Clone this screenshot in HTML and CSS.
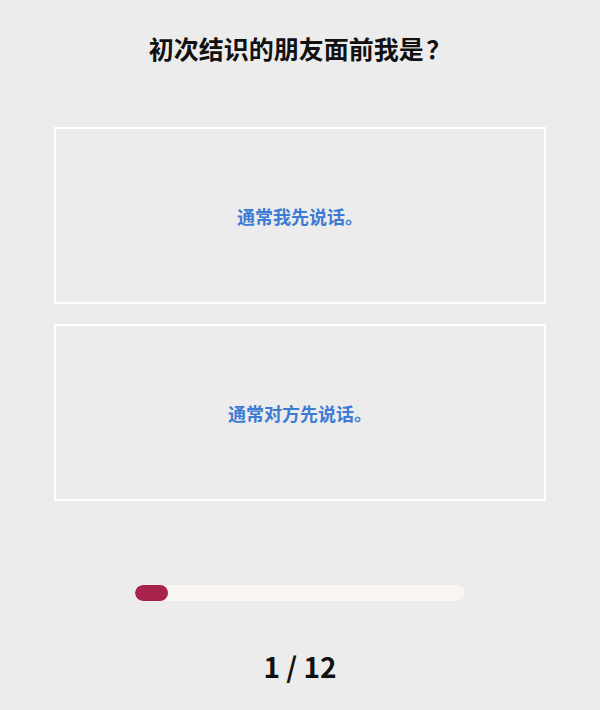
FILE: index.html
```html
<!DOCTYPE html>
<html lang="zh-CN">
<head>
	<meta charset="UTF-8" />
	<title>测试</title>
	<link rel="stylesheet" href="styles.css">
</head>
<body>
	<div class="wrap">
		<h1 class="title">初次结识的朋友面前我是<span class="mark">？</span></h1>
		<div class="options">
			<div class="option">通常我先说话。</div>
			<div class="option">通常对方先说话。</div>
		</div>
		<div class="bar">
			<div class="bar-fill" style="width: 33px"></div>
		</div>
		<div class="count">1 / 12</div>
	</div>
</body>
</html>
```

FILE: styles.css
```css
body{
	margin:0;
	background-color:#ececec;
	font-family:"Noto Sans CJK SC","Noto Sans",sans-serif;
}
.wrap{
	width:600px;
	height:710px;
	display:flex;
	flex-direction:column;
	align-items:center;
}
.title{
	margin:30px 0 0;
	font-size:25px;
	line-height:36px;
	font-weight:bold;
	color:#111;
	text-align:center;
}
.title .mark{
	display:inline-block;
	width:1.1em;
	text-align:right;
}
.options{
	margin-top:61px;
	display:flex;
	flex-direction:column;
	gap:20px;
}
.option{
	width:488px;
	height:173px;
	border:2px solid #fff;
	display:flex;
	align-items:center;
	justify-content:center;
	color:#3d7bd4;
	font-size:18px;
	font-weight:bold;
}
.bar{
	margin-top:84px;
	width:330px;
	height:16px;
	border-radius:8px;
	background-color:#f9f6f1;
	overflow:hidden;
}
.bar-fill{
	height:100%;
	border-radius:8px;
	background-color:#a8234b;
}
.count{
	margin-top:46px;
	font-size:28px;
	line-height:38px;
	font-weight:bold;
	color:#111;
}
```
